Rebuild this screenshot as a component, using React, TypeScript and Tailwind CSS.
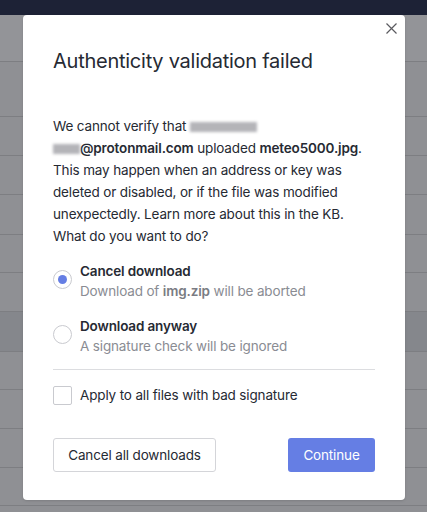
import React from "react"

const rows = [
  { h: "h-[47px]", bg: "bg-[#939498]" },
  { h: "h-[55px]", bg: "bg-[#8f9094]" },
  { h: "h-[39px]", bg: "bg-[#8f9094]" },
  { h: "h-[39px]", bg: "bg-[#8f9094]" },
  { h: "h-[40px]", bg: "bg-[#8f9094]" },
  { h: "h-[38px]", bg: "bg-[#8f9094]" },
  { h: "h-[39px]", bg: "bg-[#8f9094]" },
  { h: "h-[40px]", bg: "bg-[#85878c]" },
  { h: "h-[38px]", bg: "bg-[#8f9094]" },
  { h: "h-[39px]", bg: "bg-[#8f9094]" },
  { h: "h-[39px]", bg: "bg-[#8f9094]" },
  { h: "h-[38px]", bg: "bg-[#8f9094]" },
  { h: "h-[20px]", bg: "bg-[#8f9094]" },
]

function Blur({ w }: { w: string }) {
  return (
    <span className={`inline-block ${w} h-[10px] align-middle bg-[#b4b4b8] blur-[1.5px]`} />
  )
}

export default function App() {
  return (
    <div
      className="relative w-[427px] h-[512px] overflow-hidden bg-[#8f9094]"
      style={{ fontFamily: "Inter, 'Noto Sans', sans-serif" }}
    >
      <div className="h-[15px] bg-[#1d2236]" />
      {rows.map((r, i) => (
        <div key={i} className={`${r.h} ${r.bg} border-b border-[#7d7e82]`} />
      ))}

      <div className="absolute left-[23px] top-[15px] w-[382px] h-[485px] bg-white rounded-[4px] shadow-sm px-[30px] pt-[32px] text-[13.5px] tracking-[-0.15px]">
        <button className="absolute right-[5px] top-[4px] w-[18px] h-[18px] flex items-center justify-center text-[#5a5a5f]">
          <svg width="11" height="11" viewBox="0 0 11 11" fill="none" stroke="currentColor" strokeWidth="1.2">
            <path d="M0.5 0.5L10.5 10.5M10.5 0.5L0.5 10.5" />
          </svg>
        </button>

        <h2 className="text-[20px] leading-[28px] tracking-[-0.25px] text-[#262a33] font-normal">
          Authenticity validation failed
        </h2>

        <p className="mt-[40px] leading-[22px] text-[#262a33]">
          We cannot verify that <Blur w="w-[67px]" />
          <br />
          <Blur w="w-[27px]" />
          <b className="font-semibold">@protonmail.com</b> uploaded{" "}
          <b className="font-semibold">meteo5000.jpg</b>. This may happen when an address or key was
          deleted or disabled, or if the file was modified unexpectedly. Learn more about this in the KB.
          What do you want to do?
        </p>

        <div className="mt-[14px] flex flex-col gap-[15px]">
          <label className="flex items-start gap-[8px]">
            <span className="mt-[9px] w-[19px] h-[19px] rounded-full border border-[#c9cacf] flex items-center justify-center shrink-0">
              <span className="w-[9px] h-[9px] rounded-full bg-[#657ee4]" />
            </span>
            <span className="flex flex-col">
              <span className="leading-[20px] font-semibold text-[#262a33]">Cancel download</span>
              <span className="leading-[20px] text-[#8a8c93]">
                Download of <b className="font-semibold text-[#7a7c83]">img.zip</b> will be aborted
              </span>
            </span>
          </label>
          <label className="flex items-start gap-[8px]">
            <span className="mt-[9px] w-[19px] h-[19px] rounded-full border border-[#c9cacf] shrink-0" />
            <span className="flex flex-col">
              <span className="leading-[20px] font-semibold text-[#262a33]">Download anyway</span>
              <span className="leading-[20px] text-[#8a8c93]">A signature check will be ignored</span>
            </span>
          </label>
        </div>

        <div className="mt-[13px] h-px bg-[#dcdde0]" />

        <label className="mt-[15px] flex items-center gap-[8px]">
          <span className="w-[19px] h-[19px] rounded-[2px] border border-[#c9cacf] shrink-0" />
          <span className="leading-[20px] text-[#262a33]">Apply to all files with bad signature</span>
        </label>

        <div className="mt-[33px] flex justify-between">
          <button className="h-[34px] w-[163px] rounded-[3px] border border-[#d4d5d9] bg-white text-[#262a33]">
            Cancel all downloads
          </button>
          <button className="h-[34px] w-[87px] rounded-[3px] bg-[#657ee4] text-white">
            Continue
          </button>
        </div>
      </div>
    </div>
  )
}
